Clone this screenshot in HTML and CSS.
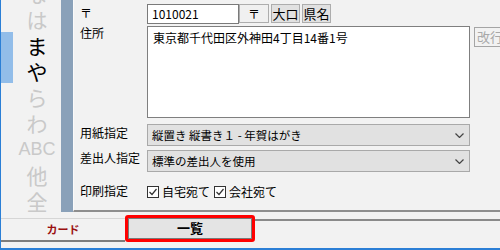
FILE: index.html
```html
<!DOCTYPE html>
<html lang="ja">
<head>
<meta charset="utf-8">
<link rel="stylesheet" href="styles.css">
</head>
<body>
<div class="win">
  <div class="main">
    <div class="idx"><div class="idx-sel"></div></div>
    <div class="kana">
      <span class="k">な</span>
      <span class="k">は</span>
      <span class="k on">ま</span>
      <span class="k on">や</span>
      <span class="k">ら</span>
      <span class="k">わ</span>
      <span class="k abc">ABC</span>
      <span class="k">他</span>
      <span class="k">全</span>
    </div>
    <div class="bar"></div>
    <div class="panel">
      <div class="row r-zip">
        <div class="lbl l-zip">〒</div>
        <div class="zip">1010021</div>
        <div class="btn b-zip">〒</div>
        <div class="btn b-sm">大口</div>
        <div class="btn b-sm">県名</div>
      </div>
      <div class="row r-addr">
        <div class="lbl l-addr">住所</div>
        <div class="addr">東京都千代田区外神田4丁目14番1号</div>
        <div class="btn-dis">改行</div>
      </div>
      <div class="row r-sel1">
        <div class="lbl l-sel1">用紙指定</div>
        <div class="sel"><span>縦置き 縦書き１ - 年賀はがき</span><svg class="chev" width="9" height="5" viewBox="0 0 9 5"><polyline points="0.5,0.5 4.5,4.5 8.5,0.5" fill="none" stroke="#444" stroke-width="1.2"/></svg></div>
      </div>
      <div class="row r-sel2">
        <div class="lbl l-sel2">差出人指定</div>
        <div class="sel"><span>標準の差出人を使用</span><svg class="chev" width="9" height="5" viewBox="0 0 9 5"><polyline points="0.5,0.5 4.5,4.5 8.5,0.5" fill="none" stroke="#444" stroke-width="1.2"/></svg></div>
      </div>
      <div class="row r-chk">
        <div class="lbl l-chk">印刷指定</div>
        <div class="chks">
          <div class="chk"><svg width="12" height="12" viewBox="0 0 12 12"><rect x="0.5" y="0.5" width="11" height="11" fill="#fff" stroke="#333"/><polyline points="2.5,6 5,8.5 9.5,3" fill="none" stroke="#333" stroke-width="1.2"/></svg><span>自宅宛て</span></div>
          <div class="chk"><svg width="12" height="12" viewBox="0 0 12 12"><rect x="0.5" y="0.5" width="11" height="11" fill="#fff" stroke="#333"/><polyline points="2.5,6 5,8.5 9.5,3" fill="none" stroke="#333" stroke-width="1.2"/></svg><span>会社宛て</span></div>
        </div>
      </div>
    </div>
  </div>
  <div class="tabs">
    <div class="tab-card"><div class="tab-card-in">カード</div></div>
    <div class="tab-list"><div class="tab-list-in">一覧</div></div>
    <div class="tab-rest"></div>
  </div>
</div>
</body>
</html>
```
FILE: styles.css
```css
* { box-sizing: border-box; }
html, body {
  margin: 0;
  width: 500px;
  height: 250px;
  overflow: hidden;
  background: #f2f2f2;
}
body {
  font-family: "Noto Sans CJK JP", "Noto Sans", sans-serif;
  font-size: 12px;
  color: #000;
}
.win {
  height: 250px;
  border-left: 1px solid #2b7fd6;
  border-bottom: 2px solid #2b7fd6;
  display: flex;
  flex-direction: column;
}
.main {
  height: 212px;
  display: flex;
  overflow: hidden;
}
.idx {
  flex: 0 0 12px;
  padding-top: 32px;
}
.idx-sel {
  height: 51px;
  background: #92bde9;
}
.kana {
  flex: 0 0 48px;
  display: flex;
  flex-direction: column;
  align-items: center;
  margin-top: -20px;
  font-size: 21px;
  line-height: 26px;
  color: #c9c9c9;
}
.k.on { color: #000; }
.k.abc {
  font-family: "Liberation Sans", sans-serif;
  font-size: 18px;
}
.bar {
  flex: 0 0 12px;
  background: #8aa1b9;
}
.panel {
  flex: 1 1 auto;
  min-width: 0;
  overflow: hidden;
  border-left: 1px solid #fafafa;
  border-bottom: 2px solid #8e8e8e;
  padding-top: 4px;
}
.row {
  display: flex;
  align-items: flex-start;
}
.row > * { flex-shrink: 0; }
.lbl {
  width: 73px;
  padding-left: 6px;
  white-space: nowrap;
}
.l-zip { line-height: 17px; }
.zip {
  width: 92px;
  height: 20px;
  background: #fff;
  border: 1px solid #7a7a7a;
  padding-left: 4px;
  line-height: 18px;
}
.btn {
  height: 19px;
  border: 1px solid #adadad;
  background: #e1e1e1;
  text-align: center;
  line-height: 17px;
  font-size: 13px;
}
.b-zip {
  width: 30px;
  background: #f0f0f0;
  font-size: 12px;
}
.b-sm {
  width: 29px;
  margin-left: 2px;
}
.r-addr { margin-top: 2px; }
.l-addr { line-height: 14px; }
.addr {
  width: 323px;
  height: 92px;
  background: #fff;
  border: 1px solid #7f7f7f;
  padding: 3px 5px;
  line-height: 16px;
  white-space: nowrap;
}
.btn-dis {
  width: 40px;
  height: 20px;
  margin-left: 4px;
  margin-top: 1px;
  border: 1px solid #a5a5a5;
  color: #a8a8a8;
  font-size: 13px;
  line-height: 18px;
  padding-left: 2px;
  white-space: nowrap;
}
.r-sel1 { margin-top: 6px; }
.r-sel2 { margin-top: 4px; }
.l-sel1 { line-height: 17px; }
.l-sel2 { line-height: 16px; }
.sel {
  width: 323px;
  height: 22px;
  background: #e1e1e1;
  border: 1px solid #a9a9a9;
  display: flex;
  align-items: center;
  justify-content: space-between;
  padding: 0 5px 0 4px;
  font-size: 11.5px;
  line-height: 20px;
}
.chev { display: block; }
.r-chk { margin-top: 12px; }
.l-chk { line-height: 14px; }
.chks {
  display: flex;
  gap: 4px;
  padding-top: 1px;
}
.chk {
  display: flex;
  align-items: center;
  gap: 3px;
  line-height: 14px;
}
.chk svg { display: block; }
.tabs {
  height: 36px;
  display: flex;
}
.tab-card {
  flex: 0 0 124px;
  padding-top: 6px;
}
.tab-card-in {
  height: 24px;
  border-top: 1px solid #d6d6d6;
  border-bottom: 2px solid #7d7d7d;
  text-align: center;
  color: #9a1010;
  font-size: 11px;
  font-weight: 700;
  line-height: 20px;
}
.tab-list {
  flex: 0 0 130px;
  height: 27px;
  margin-top: 3px;
  border: 3px solid #f00;
  border-radius: 3px;
}
.tab-list-in {
  height: 100%;
  border: 1px solid #7a7a7a;
  background: #e4e4e4;
  text-align: center;
  font-weight: 700;
  font-size: 13px;
  line-height: 18px;
}
.tab-rest {
  flex: 1;
  margin-top: 7px;
  height: 2px;
  border-top: 2px solid #8a8a8a;
}
```
